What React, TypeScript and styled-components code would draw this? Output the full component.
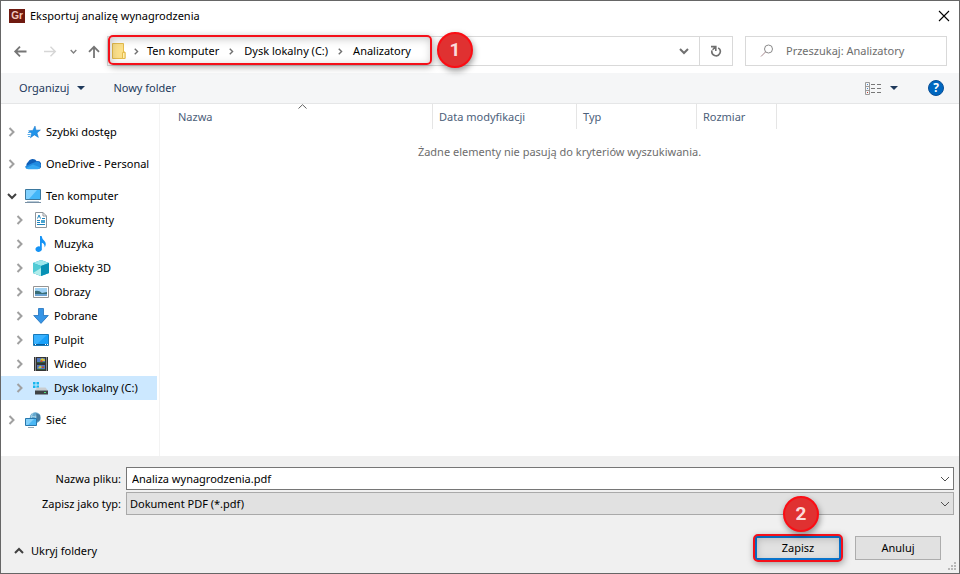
import React from "react";
import styled, { createGlobalStyle, css } from "styled-components";

const GlobalStyle = createGlobalStyle`
  *, *::before, *::after { box-sizing: border-box; }
  body { margin: 0; background: #fff; }
  body, button, input, select, table {
    font-family: "Noto Sans", "Open Sans", sans-serif;
    font-size: 11px;
    line-height: 16px;
    color: #000;
  }
  button { padding: 0; border: 0; background: none; }
  svg { display: block; flex: none; }
`;

const Dialog = styled.div`
  min-height: 100vh;
  display: flex;
  flex-direction: column;
  border: 1px solid #666;
  background: #fff;
`;

const TitleBar = styled.header`
  display: flex;
  align-items: center;
  height: 29px;
  padding: 0 9px 0 8px;
  gap: 5px;
`;

const Title = styled.h1`
  flex: 1;
  margin: 0;
  font-size: 11px;
  font-weight: 400;
`;

const AppMark = styled.span`
  width: 16px;
  height: 14px;
  background: #6f1a10;
  color: #f3c9bd;
  font: 700 10px/14px "Liberation Sans", sans-serif;
  text-align: center;
`;

const NavBar = styled.nav`
  display: flex;
  align-items: center;
  padding: 6px 12px 7px 12px;
`;

const NavButtons = styled.div`
  display: flex;
  align-items: center;
  width: 94px;
`;

const NavButton = styled.button<{ $width: number }>`
  width: ${(p) => p.$width}px;
  height: 30px;
  display: flex;
  align-items: center;
`;

const AddressBar = styled.div`
  flex: 1;
  display: flex;
  align-items: stretch;
  height: 30px;
  border: 1px solid #d9d9d9;
`;

const Highlight = css`
  content: "";
  position: absolute;
  border: 2px solid #f4101a;
  border-radius: 5px;
  box-shadow: 1px 2px 7px rgba(0, 0, 0, 0.35), inset 1px 2px 9px rgba(0, 0, 0, 0.22);
  pointer-events: none;
`;

const Crumbs = styled.div`
  position: relative;
  display: flex;
  align-items: center;
  width: 324px;
  padding-left: 4px;

  &::after {
    ${Highlight}
    inset: -2px 0 0 0;
  }
`;

const Crumb = styled.a`
  color: #000;
  text-decoration: none;
  white-space: nowrap;
`;

const CrumbArrow = styled.span<{ $first?: boolean }>`
  display: flex;
  justify-content: center;
  width: ${(p) => (p.$first ? 21 : 25)}px;
`;

const Badge = styled.span`
  position: absolute;
  z-index: 2;
  width: 36px;
  height: 36px;
  border: 2px solid #fb0d14;
  border-radius: 50%;
  background: #e03131;
  color: #fbdcdc;
  font: 700 19px/32px Roboto, sans-serif;
  text-align: center;
  box-shadow: 1px 3px 6px rgba(0, 0, 0, 0.4);
`;

const CrumbBadge = styled(Badge)`
  left: calc(100% + 5px);
  top: -5px;
`;

const SaveBadge = styled(Badge)`
  left: 28px;
  bottom: 28px;
`;

const BarButton = styled.button<{ $divided?: boolean }>`
  width: ${(p) => (p.$divided ? 33 : 30)}px;
  display: flex;
  align-items: center;
  justify-content: center;
  border-left: ${(p) => (p.$divided ? "1px solid #d9d9d9" : "0")};
`;

const Spacer = styled.div`
  flex: 1;
`;

const SearchBox = styled.label`
  display: flex;
  align-items: center;
  gap: 12px;
  width: 202px;
  height: 30px;
  margin-left: 12px;
  padding-left: 14px;
  border: 1px solid #d9d9d9;
`;

const SearchInput = styled.input`
  flex: 1;
  min-width: 0;
  padding: 0;
  border: 0;
  outline: 0;
  background: none;
  &::placeholder { color: #6d6d6d; opacity: 1; }
`;

const Toolbar = styled.div`
  display: flex;
  align-items: center;
  height: 31px;
  padding: 0 15px 0 18px;
  background: #f5f6f7;
  border-bottom: 1px solid #e5e6e7;
`;

const ToolButton = styled.button<{ $after?: number }>`
  display: flex;
  align-items: center;
  gap: 8px;
  margin-right: ${(p) => p.$after ?? 0}px;
  color: #1e395b;
`;

const Main = styled.main`
  flex: 1;
  display: flex;
`;

const Sidebar = styled.aside`
  flex: none;
  width: 159px;
  padding-top: 16px;
  border-right: 1px solid #f3f3f3;
`;

const Tree = styled.ul`
  list-style: none;
  margin: 0 2px 0 0;
  padding: 0;
`;

const TreeRow = styled.li<{ $level: number; $selected?: boolean; $gap?: boolean }>`
  display: flex;
  align-items: center;
  height: 24px;
  margin-bottom: ${(p) => (p.$gap ? 8 : 0)}px;
  padding-left: ${(p) => (p.$level ? 14 : 6)}px;
  background: ${(p) => (p.$selected ? "#cce8ff" : "transparent")};
  white-space: nowrap;
`;

const Expander = styled.button`
  flex: none;
  width: 18px;
  height: 16px;
  display: flex;
  align-items: center;
`;

const TreeLink = styled.a`
  display: flex;
  align-items: center;
  gap: 5px;
  color: #000;
  text-decoration: none;
`;

const FileTable = styled.table`
  flex: 1;
  align-self: flex-start;
  width: 100%;
  table-layout: fixed;
  border-collapse: separate;
  border-spacing: 0;
`;

const HeadCell = styled.th<{ $width?: number; $name?: boolean }>`
  position: relative;
  width: ${(p) => (p.$width ? `${p.$width}px` : "auto")};
  height: 25px;
  padding: 0 0 0 ${(p) => (p.$name ? 18 : 6)}px;
  border-right: ${(p) => (p.$width ? "1px solid #e5e5e5" : "0")};
  color: #4c607a;
  font-weight: 400;
  text-align: left;
`;

const SortMark = styled.svg`
  position: absolute;
  top: 0;
  left: calc(50% + 2px);
`;

const EmptyCell = styled.td`
  padding: 15px 0 0;
  color: #6d6d6d;
  text-align: center;
`;

const Footer = styled.form`
  padding: 11px 5px 0 6px;
  background: #f0f0f0;
`;

const FieldRow = styled.div`
  display: grid;
  grid-template-columns: 114px 1fr;
  column-gap: 5px;
  align-items: center;
  margin-bottom: 2px;
`;

const FieldLabel = styled.label`
  text-align: right;
`;

const Combo = styled.div<{ $filled?: boolean }>`
  display: flex;
  align-items: center;
  height: 23px;
  padding-right: 3px;
  border: 1px solid ${(p) => (p.$filled ? "#a9a9a9" : "#767676")};
  background: ${(p) => (p.$filled ? "#e1e1e1" : "#fff")};
`;

const NameInput = styled.input`
  flex: 1;
  height: 20px;
  padding: 0 5px;
  border: 0;
  outline: 0;
  background: none;
`;

const TypeSelect = styled.select`
  flex: 1;
  height: 20px;
  padding: 0 3px;
  border: 0;
  outline: 0;
  background: none;
  appearance: none;
`;

const Actions = styled.div`
  position: relative;
  display: flex;
  align-items: flex-start;
  gap: 14px;
  padding: 17px 13px 5px 7px;
`;

const FoldButton = styled.button`
  display: flex;
  align-items: center;
  gap: 7px;
  height: 34px;
`;

const ButtonSlot = styled.div<{ $marked?: boolean }>`
  position: relative;
  padding-top: 2px;

  ${(p) =>
    p.$marked &&
    css`
      &::after {
        ${Highlight}
        inset: 0 -2px -2px -2px;
      }
    `}
`;

const PushButton = styled.button<{ $primary?: boolean }>`
  width: 86px;
  height: 24px;
  border: ${(p) => (p.$primary ? "2px solid #0a7ad6" : "1px solid #adadad")};
  background: #e1e1e1;
`;

const Grip = styled.svg`
  position: absolute;
  right: -3px;
  bottom: 2px;
`;

type Dir = "right" | "down" | "up";

const Chevron = ({ dir, color, size = 10, width = 2 }: { dir: Dir; color: string; size?: number; width?: number }) => {
  const d = { right: "M2.5 1 6.5 5 2.5 9", down: "M1 3 5 7 9 3", up: "M1 7 5 3 9 7" }[dir];
  return (
    <svg width={size} height={size} viewBox="0 0 10 10" fill="none" stroke={color} strokeWidth={width} aria-hidden="true">
      <path d={d} />
    </svg>
  );
};

const Caret = () => (
  <svg width="8" height="4" viewBox="0 0 8 4" aria-hidden="true">
    <path d="M0 0H8L4 4Z" fill="#1e395b" />
  </svg>
);

const Arrow = ({ kind }: { kind: "back" | "forward" | "up" }) => (
  <svg width="14" height="14" viewBox="0 0 14 14" fill="none" stroke={kind === "forward" ? "#d6d6d6" : "#757575"} strokeWidth={kind === "forward" ? 1.4 : 1.8} aria-hidden="true">
    {kind === "back" && <path d="M13.5 7.5H2.5M7 2.7 2.2 7.5l4.8 4.8" />}
    {kind === "forward" && <path d="M1 7.5H12M7.5 2.7 12.3 7.5l-4.8 4.8" />}
    {kind === "up" && <path d="M7 14V3M2 7.8 7 2.8l5 5" />}
  </svg>
);

const FolderIcon = () => (
  <svg width="14" height="16" viewBox="0 0 14 16" aria-hidden="true">
    <path d="M.5.5H11.5V9H13V15.5H.5Z" fill="#fbe08a" stroke="#e6bd4d" />
    <path d="M10.5 9.5H13V15.5H10.5Z" fill="#fff0b3" stroke="#e6bd4d" />
  </svg>
);

const RefreshIcon = () => (
  <svg width="12" height="12" viewBox="0 0 12 12" fill="none" stroke="#707070" strokeWidth="1.6" aria-hidden="true">
    <path d="M8.2 2.9A4.2 4.2 0 1 1 2 5.4" />
    <path d="M1 1.6H5.8V6M5.6 1.8 2.6 4.8" />
  </svg>
);

const SearchIcon = () => (
  <svg width="14" height="14" viewBox="0 0 14 14" fill="none" stroke="#8a8a8a" aria-hidden="true">
    <circle cx="8.5" cy="5" r="4" />
    <path d="M5.6 7.9 1 12.5" stroke="#a4868c" />
  </svg>
);

const ViewIcon = () => (
  <svg width="17" height="13" viewBox="0 0 17 13" fill="none" aria-hidden="true">
    <path d="M.5.5H4.5V12.5H.5ZM.5 4.5H4.5M.5 8.5H4.5" stroke="#9a9a9a" />
    <path d="M6 2.5H10M12 2.5H16M6 6.5H10M12 6.5H16M6 10.5H10M12 10.5H16" stroke="#777" />
    <path d="M2 2H3V3H2ZM2 6H3V7H2Z" fill="#4b86c8" />
    <path d="M2 10H3V11H2Z" fill="#c0392b" />
  </svg>
);

const HelpMark = styled.button`
  width: 16px;
  height: 16px;
  border-radius: 50%;
  background: #0067c0;
  border: 1px solid #0a4f96;
  color: #fff;
  font: 700 12px/14px "Noto Sans", sans-serif;
`;

type IconName =
  | "star" | "cloud" | "pc" | "doc" | "music" | "cube" | "image" | "down" | "desktop" | "film" | "disk" | "network";

const drawings: Record<IconName, React.ReactNode> = {
  star: (
    <>
      <path d="M10 2 11 6.2 15.4 6 12 9 13.4 13.4 9.4 10.9 5.4 13.8 6.6 9.6 3.6 6.8 7.8 6.4Z" fill="#2093ea" stroke="#1271c4" strokeWidth=".5" />
      <path d="M3 8.5H5.5M2.5 10.5H5.5M3 12.5H5" stroke="#55acec" />
    </>
  ),
  cloud: (
    <>
      <path d="M4 13A4 4 0 0 1 3 6 5 5 0 0 1 11.8 5.2 3.8 3.8 0 0 1 13 13Z" fill="#0f5fb8" />
      <path d="M6.5 7.5 12 5.5A4 4 0 0 1 15.8 10L13 13H3Q.5 13 0 10.5Z" fill="#218be0" />
      <path d="M1 12 8 8.5 15.3 11.6Q14.5 13.2 12.5 13.2H3.5Q2 13.2 1 12Z" fill="#35a7f2" />
    </>
  ),
  pc: (
    <>
      <path d="M.5 1.5H15.5V11.5H.5Z" fill="#43b6f8" stroke="#3b789e" />
      <path d="M1 2H12L4 11H1Z" fill="#80d1ff" />
      <path d="M0 14.5H16" stroke="#7890a5" />
      <path d="M2 13.5H14" stroke="#b9cbd8" />
    </>
  ),
  doc: (
    <>
      <path d="M2.5.5H10L13.5 4V15.5H2.5Z" fill="#fff" stroke="#8e959b" />
      <path d="M10 .5V4H13.5" fill="none" stroke="#8e959b" />
      <path d="M4.5 6.5 6 3 7.5 6.5M4 8.5H7M4 10.5H7M4 12.5H12M9 6.5H12" fill="none" stroke="#1d83bd" />
      <path d="M8 8H12V11H8Z" fill="#49a4d0" />
    </>
  ),
  music: (
    <path d="M7 0H8.6Q9 3 11.5 5 14 7.6 11.6 11.6 11.8 7.6 8.8 6.8V12.5A3.2 2.8 0 1 1 7 10.6Z" fill="#1593f5" />
  ),
  cube: (
    <>
      <path d="M0 3 8 0 16 3V13L8 16 0 13Z" fill="#13a7c5" />
      <path d="M0 3 8 0 16 3 8 6Z" fill="#9de8ed" />
      <path d="M0 3 8 6V16L0 13Z" fill="#51cbd5" />
      <path d="M0 13 8 8V16Z" fill="#b0eceb" />
      <path d="M8 6 16 3V13L8 16Z" fill="#0791b5" />
    </>
  ),
  image: (
    <>
      <path d="M.5 2.5H15.5V13.5H.5Z" fill="#fff" stroke="#949494" />
      <path d="M2 4H14V12H2Z" fill="#9fd2f5" />
      <path d="M2 7Q6 6 9 9L14 8V12H2Z" fill="#386d76" />
      <path d="M2 10H14V12H2Z" fill="#6ba2d1" />
    </>
  ),
  down: <path d="M5.5 .5H10.5V7.5H15.3L8 15.4.7 7.5H5.5Z" fill="#3695e6" stroke="#2272bd" strokeWidth=".8" />,
  desktop: (
    <>
      <path d="M.5 2.5H15.5V13.5H.5Z" fill="#18a0fa" stroke="#1879b9" />
      <path d="M1 3H14L4 12H1Z" fill="#39b2ff" />
      <path d="M1 12.5H15" stroke="#075d9b" />
      <path d="M2 12.5H3M12 12.5H13M14 12.5H15" stroke="#fff" />
    </>
  ),
  film: (
    <>
      <path d="M1 1H15V15H1Z" fill="#343434" />
      <path d="M2.5 1.5V15M13.5 1.5V15" stroke="#e6e6e6" strokeDasharray="1 1" />
      <path d="M4 2H12V7H4ZM4 9H12V14H4Z" fill="#5277bd" />
      <path d="M7 4 9 2 12 3.5V5H8ZM5 12 7 9.5 9 11 7 12.5Z" fill="#d8c63a" />
      <path d="M8 4 10 5 9 6.5 7 6ZM9 10.5H11V12H9Z" fill="#c34b2b" />
      <path d="M4 6H12V7H4ZM4 13H12V14H4Z" fill="#2f5f3c" />
    </>
  ),
  disk: (
    <>
      <path d="M0 2H2.5V4.5H0ZM3.5 2H6V4.5H3.5ZM0 5.5H2.5V8H0ZM3.5 5.5H6V8H3.5Z" fill="#17b7ee" />
      <path d="M4 7.5H12.5L15 10.5H2Z" fill="#c9cdd0" />
      <path d="M2 10.5H15V14.5H2Z" fill="#3f4346" />
      <path d="M11 12H13V13H11Z" fill="#4ee17c" />
    </>
  ),
  network: (
    <>
      <circle cx="10.3" cy="5.7" r="5.5" fill="#63a8cf" />
      <path d="M8 1Q5 4 7 8M12 .8Q9 5 12 10M6 4Q11 6 15 4" fill="none" stroke="#b5d9ea" strokeWidth=".8" />
      <path d="M11 1 15 3V8L12 10Z" fill="#477b9e" />
      <path d="M.5 6.5H11.5V13.5H.5Z" fill="#4ab7f4" stroke="#2777ad" />
      <path d="M1 7H9L3 13H1Z" fill="#82d0fa" />
      <path d="M3 15.5H9" stroke="#93a8b4" />
    </>
  ),
};

const TreeIcon = ({ name }: { name: IconName }) => (
  <svg width="16" height="16" viewBox="0 0 16 16" aria-hidden="true">{drawings[name]}</svg>
);

interface TreeItem {
  label: string;
  icon: IconName;
  level: number;
  open?: boolean;
  gap?: boolean;
  selected?: boolean;
}

const items: TreeItem[] = [
  { label: "Szybki dostęp", icon: "star", level: 0, gap: true },
  { label: "OneDrive - Personal", icon: "cloud", level: 0, gap: true },
  { label: "Ten komputer", icon: "pc", level: 0, open: true },
  { label: "Dokumenty", icon: "doc", level: 1 },
  { label: "Muzyka", icon: "music", level: 1 },
  { label: "Obiekty 3D", icon: "cube", level: 1 },
  { label: "Obrazy", icon: "image", level: 1 },
  { label: "Pobrane", icon: "down", level: 1 },
  { label: "Pulpit", icon: "desktop", level: 1 },
  { label: "Wideo", icon: "film", level: 1 },
  { label: "Dysk lokalny (C:)", icon: "disk", level: 1, gap: true, selected: true },
  { label: "Sieć", icon: "network", level: 0 },
];

const crumbs = ["Ten komputer", "Dysk lokalny (C:)", "Analizatory"];

export default function App() {
  return (
    <>
      <GlobalStyle />
      <Dialog role="dialog" aria-labelledby="dialog-title">
        <TitleBar>
          <AppMark aria-hidden="true">Gr</AppMark>
          <Title id="dialog-title">Eksportuj analizę wynagrodzenia</Title>
          <button aria-label="Zamknij">
            <svg width="12" height="12" viewBox="0 0 12 12" stroke="#000" strokeWidth="1.1"><path d="M1 1 11 11M11 1 1 11" /></svg>
          </button>
        </TitleBar>

        <NavBar>
          <NavButtons>
            <NavButton $width={30} aria-label="Wstecz"><Arrow kind="back" /></NavButton>
            <NavButton $width={27} aria-label="Dalej"><Arrow kind="forward" /></NavButton>
            <NavButton $width={17} aria-label="Ostatnie lokalizacje"><Chevron dir="down" color="#808080" size={7} /></NavButton>
            <NavButton $width={20} aria-label="W górę"><Arrow kind="up" /></NavButton>
          </NavButtons>
          <AddressBar>
            <Crumbs>
              <FolderIcon />
              {crumbs.map((c, i) => (
                <React.Fragment key={c}>
                  <CrumbArrow $first={i === 0}><Chevron dir="right" color="#707070" size={7} /></CrumbArrow>
                  <Crumb href="#">{c}</Crumb>
                </React.Fragment>
              ))}
              <CrumbBadge>1</CrumbBadge>
            </Crumbs>
            <Spacer />
            <BarButton aria-label="Poprzednie lokalizacje"><Chevron dir="down" color="#707070" /></BarButton>
            <BarButton $divided aria-label="Odśwież"><RefreshIcon /></BarButton>
          </AddressBar>
          <SearchBox>
            <SearchIcon />
            <SearchInput type="text" placeholder="Przeszukaj: Analizatory" aria-label="Przeszukaj: Analizatory" />
          </SearchBox>
        </NavBar>

        <Toolbar>
          <ToolButton $after={28}>Organizuj <Caret /></ToolButton>
          <ToolButton>Nowy folder</ToolButton>
          <Spacer />
          <ToolButton $after={30} aria-label="Zmień widok"><ViewIcon /><Caret /></ToolButton>
          <HelpMark aria-label="Pomoc">?</HelpMark>
        </Toolbar>

        <Main>
          <Sidebar>
            <Tree>
              {items.map((item) => (
                <TreeRow key={item.label} $level={item.level} $selected={item.selected} $gap={item.gap}>
                  <Expander aria-label={item.label} aria-expanded={!!item.open}>
                    <Chevron dir={item.open ? "down" : "right"} color={item.open ? "#404040" : "#a0a0a0"} />
                  </Expander>
                  <TreeLink href="#"><TreeIcon name={item.icon} />{item.label}</TreeLink>
                </TreeRow>
              ))}
            </Tree>
          </Sidebar>
          <FileTable>
            <thead>
              <tr>
                <HeadCell $width={273} $name>
                  Nazwa
                  <SortMark width="9" height="5" viewBox="0 0 9 5" fill="none" stroke="#606060" aria-hidden="true"><path d="M.5 4.5 4.5 .7 8.5 4.5" /></SortMark>
                </HeadCell>
                <HeadCell $width={144}>Data modyfikacji</HeadCell>
                <HeadCell $width={120}>Typ</HeadCell>
                <HeadCell $width={80}>Rozmiar</HeadCell>
                <HeadCell />
              </tr>
            </thead>
            <tbody>
              <tr><EmptyCell colSpan={5}>Żadne elementy nie pasują do kryteriów wyszukiwania.</EmptyCell></tr>
            </tbody>
          </FileTable>
        </Main>

        <Footer onSubmit={(e) => e.preventDefault()}>
          <FieldRow>
            <FieldLabel htmlFor="file-name">Nazwa pliku:</FieldLabel>
            <Combo>
              <NameInput id="file-name" type="text" defaultValue="Analiza wynagrodzenia.pdf" />
              <Chevron dir="down" color="#505050" width={1} />
            </Combo>
          </FieldRow>
          <FieldRow>
            <FieldLabel htmlFor="file-type">Zapisz jako typ:</FieldLabel>
            <Combo $filled>
              <TypeSelect id="file-type"><option>Dokument PDF (*.pdf)</option></TypeSelect>
              <Chevron dir="down" color="#505050" width={1} />
            </Combo>
          </FieldRow>
          <Actions>
            <FoldButton type="button"><Chevron dir="up" color="#404040" />Ukryj foldery</FoldButton>
            <Spacer />
            <ButtonSlot $marked>
              <PushButton type="submit" $primary>Zapisz</PushButton>
              <SaveBadge>2</SaveBadge>
            </ButtonSlot>
            <ButtonSlot><PushButton type="button">Anuluj</PushButton></ButtonSlot>
            <Grip width="9" height="9" viewBox="0 0 9 9" fill="#b8b8b8" aria-hidden="true">
              <path d="M6 0H8V2H6ZM3 3H5V5H3ZM6 3H8V5H6ZM0 6H2V8H0ZM3 6H5V8H3ZM6 6H8V8H6Z" />
            </Grip>
          </Actions>
        </Footer>
      </Dialog>
    </>
  );
}
